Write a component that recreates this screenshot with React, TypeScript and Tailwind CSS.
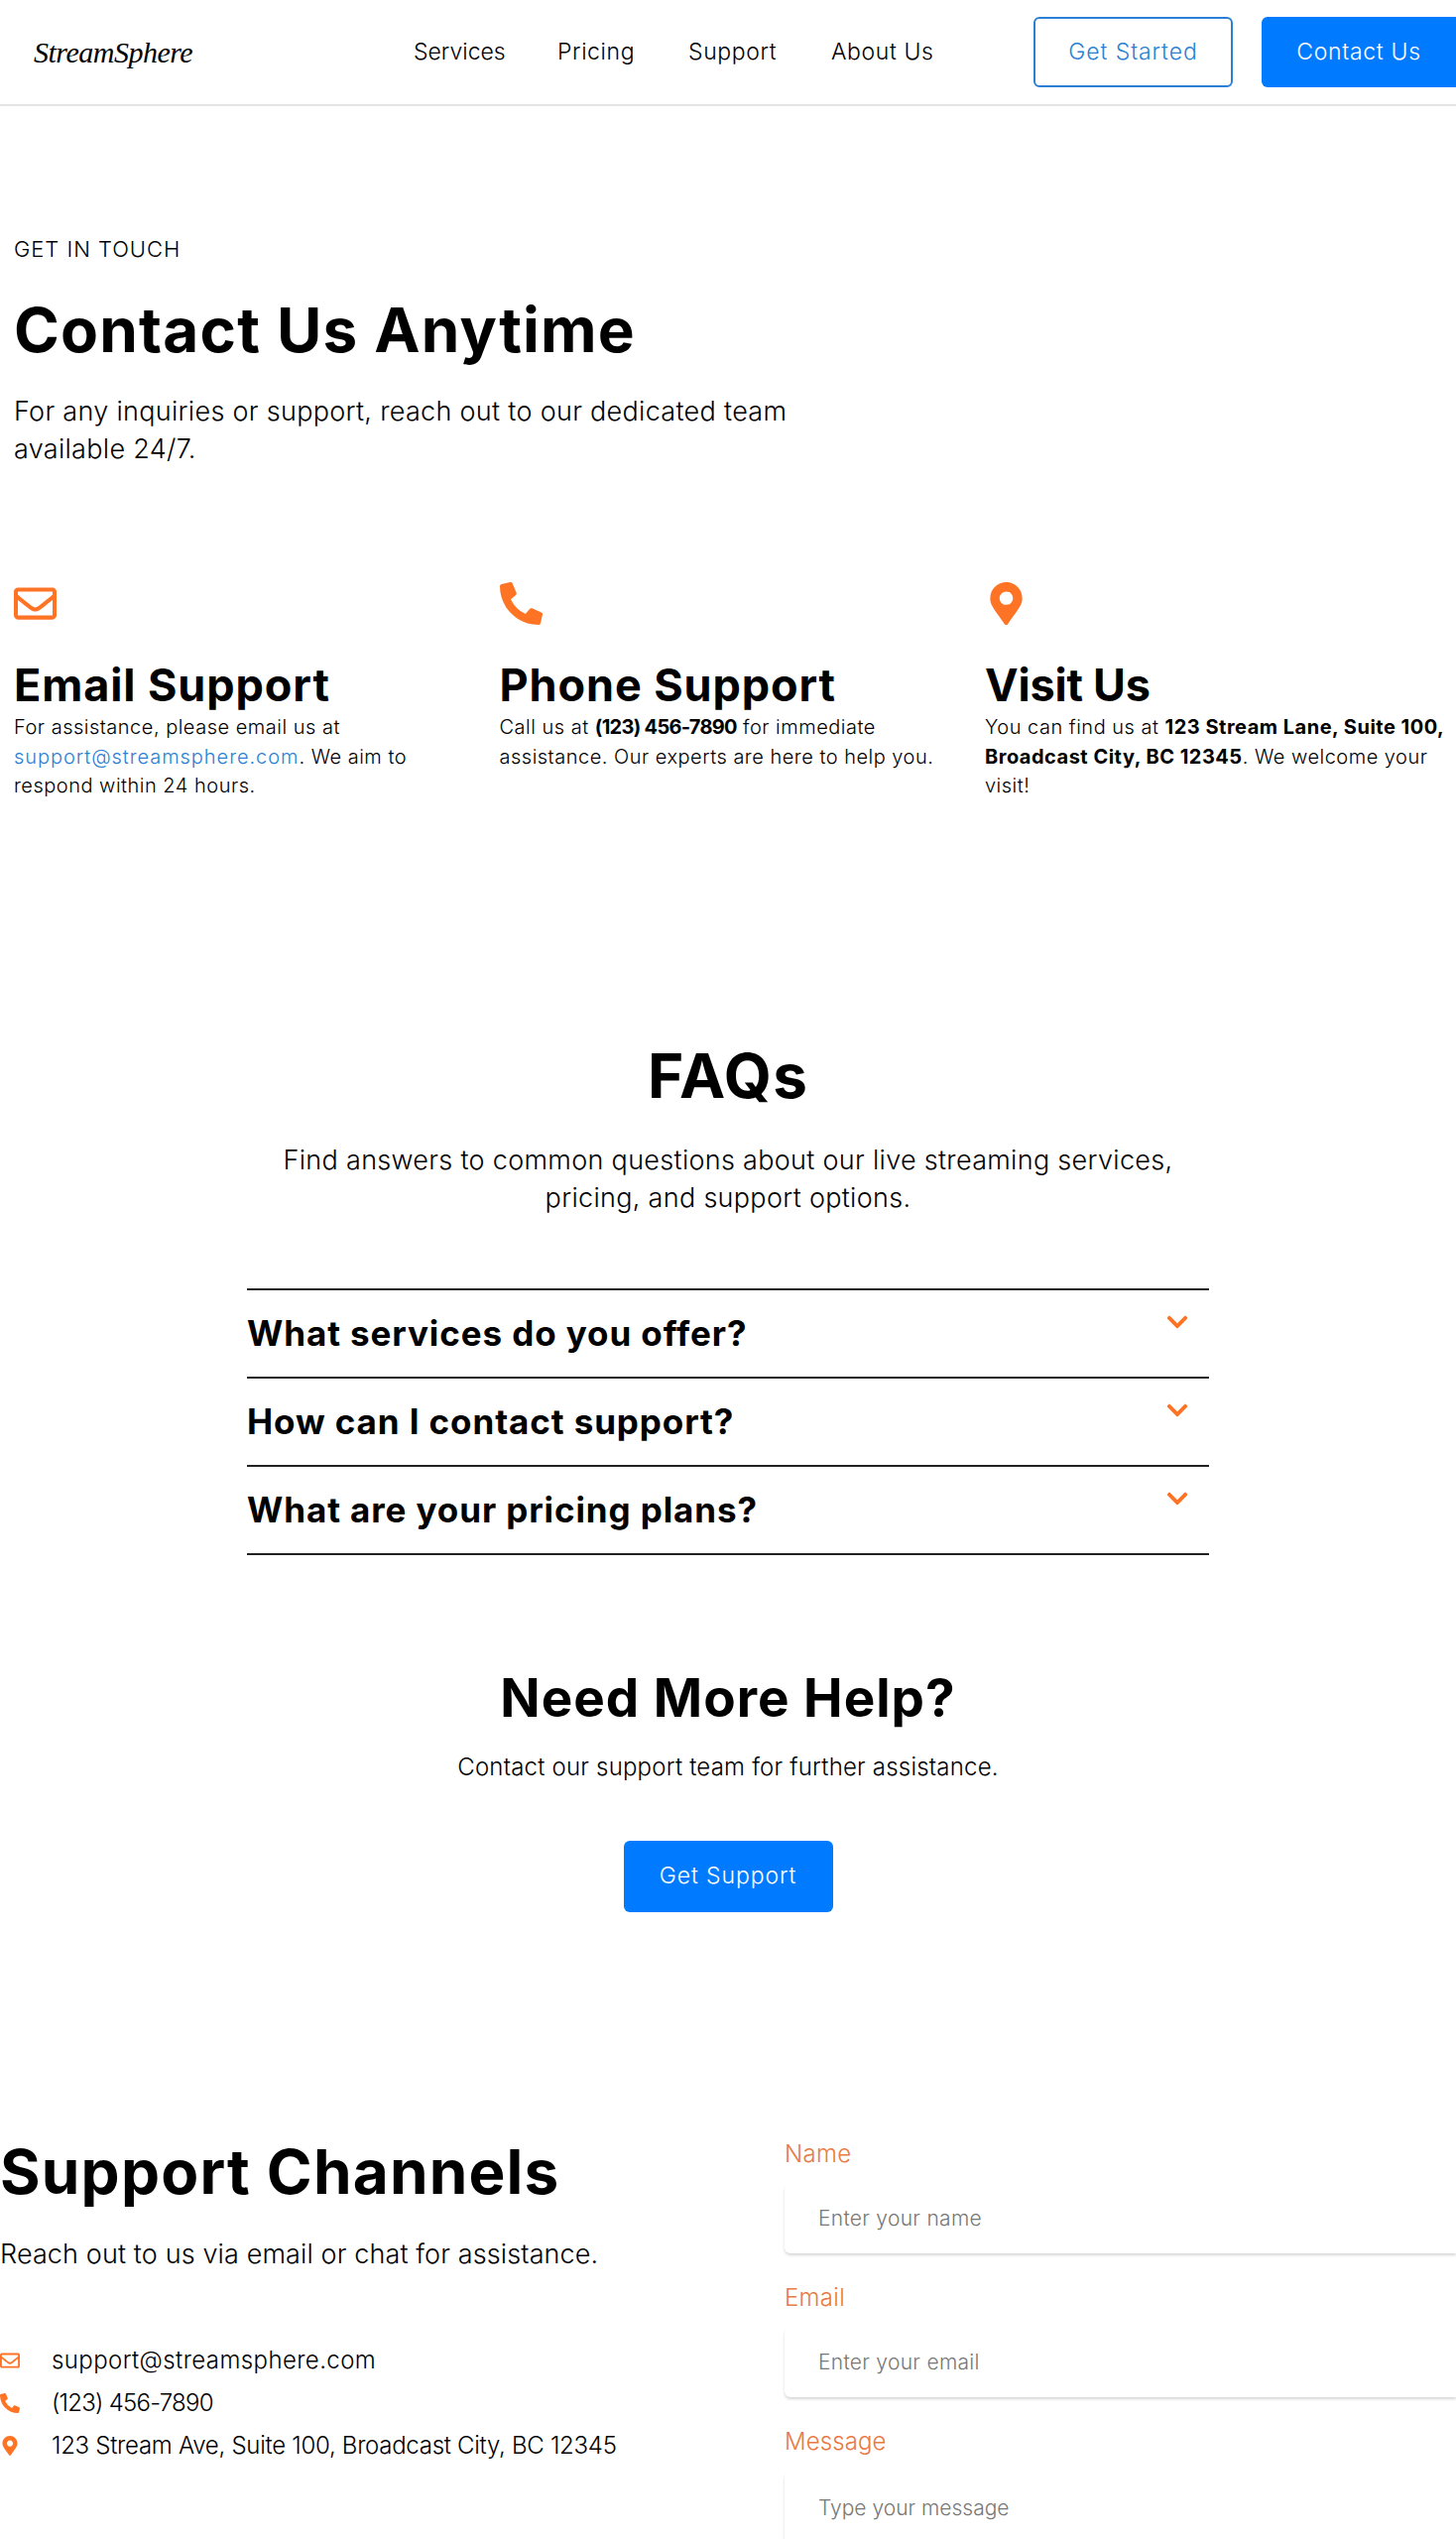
import { FaRegEnvelope, FaPhoneAlt, FaMapMarkerAlt, FaChevronDown } from "react-icons/fa";

const cards = [
  {
    icon: <FaRegEnvelope className="w-[43px] h-[43px]" />,
    title: "Email Support",
    titleClass: "tracking-[0.9px]",
    body: (
      <>
        For assistance, please email us at <a className="text-[#2b7fd4] tracking-[0.95px]">support@streamsphere.com</a>. We aim to respond within 24 hours.
      </>
    ),
  },
  {
    icon: <FaPhoneAlt className="w-[43px] h-[43px]" />,
    title: "Phone Support",
    titleClass: "tracking-[0.9px]",
    body: (
      <>
        Call us at <b className="font-bold tracking-[-0.7px]">(123) 456-7890</b> for immediate assistance. Our experts are here to help you.
      </>
    ),
  },
  {
    icon: <FaMapMarkerAlt className="w-[43px] h-[43px]" />,
    title: "Visit Us",
    titleClass: "tracking-[-0.2px]",
    body: (
      <>
        You can find us at <b className="font-bold">123 Stream Lane, Suite 100, Broadcast City, BC 12345</b>. We welcome your visit!
      </>
    ),
  },
];

const faqs = ["What services do you offer?", "How can I contact support?", "What are your pricing plans?"];

const fields = [
  { label: "Name", hint: "Enter your name" },
  { label: "Email", hint: "Enter your email" },
];

export default function App() {
  return (
    <div className="h-[2560px] overflow-hidden bg-white text-black font-['Inter',sans-serif] font-light">
      {/* header */}
      <header className="h-[107px] flex items-start border-b-2 border-[#e4e4e4]">
        <div className="w-[417px] pl-[34px] pt-[31px] font-['Liberation_Serif',serif] italic text-[30px] leading-[44px] tracking-[-0.5px]">
          StreamSphere
        </div>
        <nav className="flex pt-[36px] text-[23px] leading-[32px] tracking-[0.6px]">
          <span className="w-[145px] tracking-[0px]">Services</span>
          <span className="w-[132px]">Pricing</span>
          <span className="w-[144px]">Support</span>
          <span>About Us</span>
        </nav>
        <div className="ml-auto flex gap-[29px] pt-[17px]">
          <button className="w-[201px] h-[71px] border-2 border-[#2b7fd4] rounded-md text-[#2b7fd4] text-[23px] tracking-[0.9px]">Get Started</button>
          <button className="w-[196px] h-[71px] bg-[#007bff] rounded-l-md text-white text-[23px] tracking-[0.7px]">Contact Us</button>
        </div>
      </header>

      {/* hero */}
      <section className="px-[14px] pt-[128px]">
        <p className="text-[22px] leading-[32px] tracking-[0.95px]">GET IN TOUCH</p>
        <h1 className="mt-[30px] text-[62px] leading-[72px] font-bold tracking-[1.2px]">Contact Us Anytime</h1>
        <p className="mt-[27px] w-[800px] text-[27px] leading-[38px] tracking-[0.3px]">
          For any inquiries or support, reach out to our dedicated team available 24/7.
        </p>
      </section>

      {/* cards */}
      <section className="mt-[115px] px-[14px] grid grid-cols-[repeat(3,465px)] gap-x-[24.5px]">
        {cards.map((c) => (
          <div key={c.title}>
            <div className="h-[43px] text-[#ff7324]">{c.icon}</div>
            <h3 className={`mt-[35px] text-[45px] leading-[52px] font-bold ${c.titleClass}`}>{c.title}</h3>
            <p className="mt-[2px] text-[20px] leading-[29.5px] tracking-[0.5px]">{c.body}</p>
          </div>
        ))}
      </section>

      {/* faq */}
      <section className="mt-[241px] flex flex-col items-center">
        <h2 className="text-[62px] leading-[72px] font-bold tracking-[1.2px]">FAQs</h2>
        <p className="mt-[30px] w-[920px] text-center text-[27px] leading-[38px] tracking-[0.3px]">
          Find answers to common questions about our live streaming services, pricing, and support options.
        </p>
        <div className="mt-[72px] w-[970px] border-t-2 border-[#222]">
          {faqs.map((q) => (
            <div key={q} className="h-[89px] flex justify-between border-b-2 border-[#222]">
              <span className="pt-[21px] text-[35px] leading-[44px] font-bold tracking-[0.9px]">{q}</span>
              <FaChevronDown className="mt-[20px] mr-[20px] w-[24px] h-[24px] text-[#ff7324]" />
            </div>
          ))}
        </div>
        <h2 className="mt-[113px] text-[53px] leading-[62px] font-bold tracking-[1px]">Need More Help?</h2>
        <p className="mt-[21px] text-[24px] leading-[36px] tracking-[0.2px]">Contact our support team for further assistance.</p>
        <button className="mt-[56px] w-[211px] h-[72px] bg-[#007bff] rounded-md text-white text-[23px] tracking-[0.9px]">Get Support</button>
      </section>

      {/* support channels */}
      <section className="mt-[226px] flex justify-between">
        <div className="w-[700px]">
          <h2 className="text-[62px] leading-[72px] font-bold tracking-[1.2px]">Support Channels</h2>
          <p className="mt-[28px] text-[27px] leading-[38px] tracking-[0.12px]">Reach out to us via email or chat for assistance.</p>
          <ul className="mt-[70px] flex flex-col gap-[7px] text-[24px] leading-[36px]">
            <li className="flex items-center gap-[32px] tracking-[0.4px]">
              <FaRegEnvelope className="w-[20px] h-[20px] text-[#ff7324]" />
              support@streamsphere.com
            </li>
            <li className="flex items-center gap-[32px] tracking-[-0.75px]">
              <FaPhoneAlt className="w-[20px] h-[20px] text-[#ff7324]" />
              (123) 456-7890
            </li>
            <li className="flex items-center gap-[32px] tracking-[-0.28px]">
              <FaMapMarkerAlt className="w-[20px] h-[20px] text-[#ff7324]" />
              123 Stream Ave, Suite 100, Broadcast City, BC 12345
            </li>
          </ul>
        </div>
        <form className="w-[677px] flex flex-col">
          {fields.map((f) => (
            <div key={f.label} className="mb-[27px]">
              <label className="block text-[24px] leading-[36px] text-[#e87a42] tracking-[0.3px]">{f.label}</label>
              <input
                placeholder={f.hint}
                className="mt-[12px] w-full h-[70px] pl-[34px] rounded-l-md bg-white shadow-[0_2px_3px_rgba(0,0,0,0.16)] text-[21px] tracking-[0.3px] placeholder:text-[#777] outline-none"
              />
            </div>
          ))}
          <label className="block text-[24px] leading-[36px] text-[#e87a42] tracking-[0.1px]">Message</label>
          <textarea
            placeholder="Type your message"
            className="mt-[12px] w-full h-[180px] pl-[34px] pt-[21px] rounded-l-md bg-white shadow-[0_2px_3px_rgba(0,0,0,0.16)] text-[21px] tracking-[0px] placeholder:text-[#777] outline-none"
          />
        </form>
      </section>
    </div>
  );
}
